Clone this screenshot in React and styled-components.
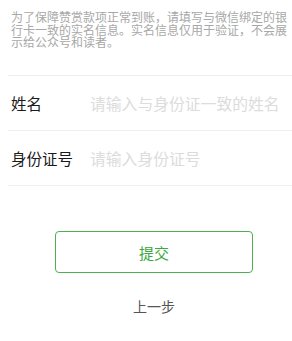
import React from 'react'
import styled, { createGlobalStyle } from 'styled-components'

const GlobalStyle = createGlobalStyle`
  html, body {
    margin: 0;
    padding: 0;
    background: #fff;
  }
  body {
    font-family: "Noto Sans CJK SC", "Liberation Sans", sans-serif;
  }
`

const Page = styled.div`
  width: 292px;
  height: 341px;
  overflow: hidden;
  background: #fff;
`

const Notice = styled.p`
  margin: 0;
  padding: 11px 4px 0 11px;
  height: 64px;
  box-sizing: border-box;
  font-size: 12px;
  line-height: 12.5px;
  color: #a8a8a8;
  letter-spacing: 0;
`

const Form = styled.div`
  margin-top: 11px;
  margin-left: 8px;
  border-top: 1px solid #eeeeee;
`

const Row = styled.label`
  display: flex;
  align-items: center;
  height: 54px;
  border-bottom: 1px solid #eeeeee;
`

const Label = styled.span`
  width: 79px;
  padding-left: 3px;
  font-size: 15.5px;
  color: #1a1a1a;
  flex-shrink: 0;
`

const Input = styled.input`
  flex: 1;
  min-width: 0;
  border: none;
  outline: none;
  padding: 0;
  background: transparent;
  font-family: inherit;
  font-size: 15.8px;
  color: #333;
  &::placeholder {
    color: #dcdcdc;
  }
`

const Actions = styled.div`
  display: flex;
  flex-direction: column;
  align-items: center;
  padding-left: 16px;
  margin-top: 45px;
`

const SubmitButton = styled.button`
  width: 198px;
  height: 42px;
  border: 1px solid #4caf50;
  border-radius: 4px;
  background: #fff;
  color: #3aa83a;
  font-family: inherit;
  font-size: 15px;
  cursor: pointer;
`

const BackLink = styled.span`
  margin-top: 23px;
  font-size: 14px;
  color: #555;
`

export default function App() {
  return (
    <Page>
      <GlobalStyle />
      <Notice>
        为了保障赞赏款项正常到账，请填写与微信绑定的银行卡一致的实名信息。实名信息仅用于验证，不会展示给公众号和读者。
      </Notice>
      <Form>
        <Row>
          <Label>姓名</Label>
          <Input placeholder="请输入与身份证一致的姓名" />
        </Row>
        <Row>
          <Label>身份证号</Label>
          <Input placeholder="请输入身份证号" />
        </Row>
      </Form>
      <Actions>
        <SubmitButton>提交</SubmitButton>
        <BackLink>上一步</BackLink>
      </Actions>
    </Page>
  )
}
